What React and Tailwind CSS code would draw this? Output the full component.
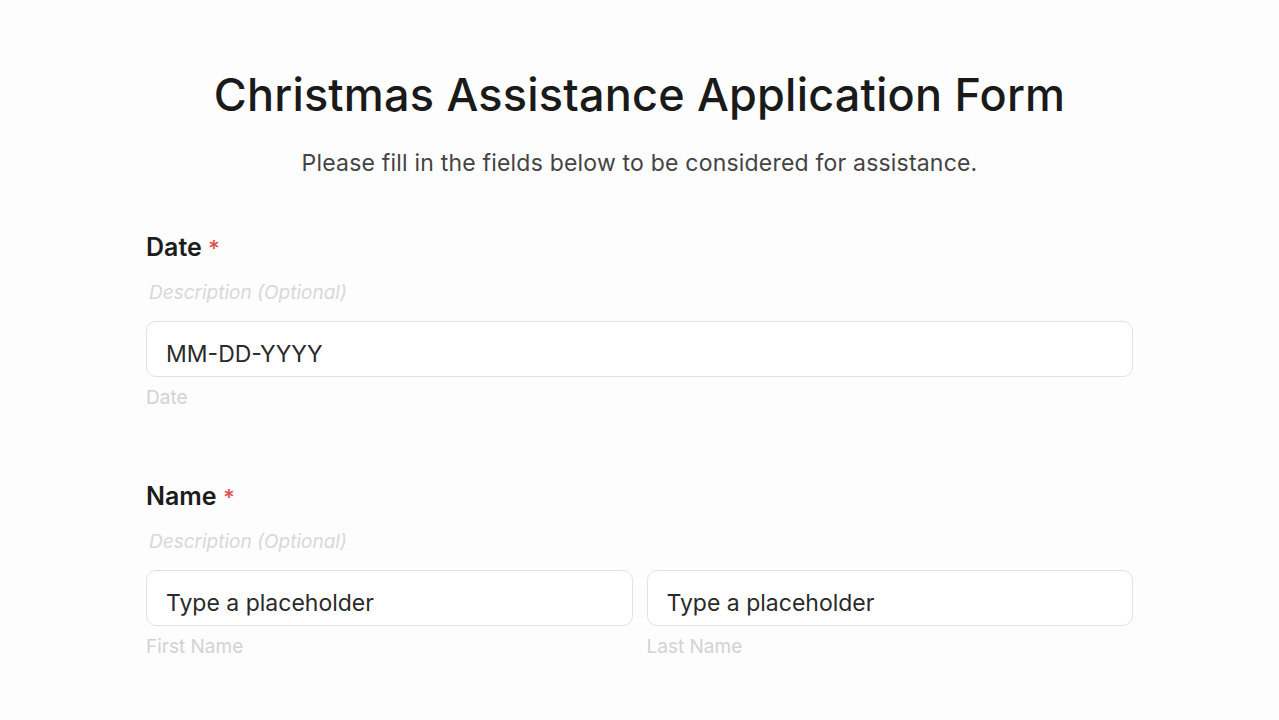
import React from 'react';

function Field({ sub, text }) {
  return (
    <div className="flex-1">
      <div className="h-[56px] rounded-[10px] border border-[#e2e2e2] bg-white flex items-center px-[19px] text-[23px] text-[#2a2a2a] pt-[10px]">
        {text}
      </div>
      <div className="mt-[11px] text-[19px] text-[#d2d2d2] leading-none">{sub}</div>
    </div>
  );
}

function Label({ children }) {
  return (
    <div className="text-[25px] font-semibold text-[#1c1c1c] leading-none">
      {children} <span className="text-[22px] text-[#e05050]">*</span>
    </div>
  );
}

function Description() {
  return (
    <div className="mt-[23px] pl-[3px] text-[19px] italic text-[#d8d8d8] leading-none">
      Description (Optional)
    </div>
  );
}

export default function App() {
  return (
    <div className="min-h-[720px] bg-[#fdfdfd] font-['Inter',sans-serif]">
      <div className="pt-[72px] text-center">
        <h1 className="text-[45px] font-medium text-[#1a1a1a] leading-none tracking-[0.2px]">
          Christmas Assistance Application Form
        </h1>
        <p className="mt-[35px] text-[23px] text-[#444] leading-none tracking-[0.2px]">
          Please fill in the fields below to be considered for assistance.
        </p>
      </div>
      <div className="mx-[146px] w-[987px] mt-[60px]">
        <Label>Date</Label>
        <Description />
        <div className="mt-[19px] flex">
          <Field sub="Date" text="MM-DD-YYYY" />
        </div>
        <div className="mt-[77px]">
          <Label>Name</Label>
          <Description />
          <div className="mt-[19px] flex gap-[14px]">
            <Field sub="First Name" text="Type a placeholder" />
            <Field sub="Last Name" text="Type a placeholder" />
          </div>
        </div>
      </div>
    </div>
  );
}
